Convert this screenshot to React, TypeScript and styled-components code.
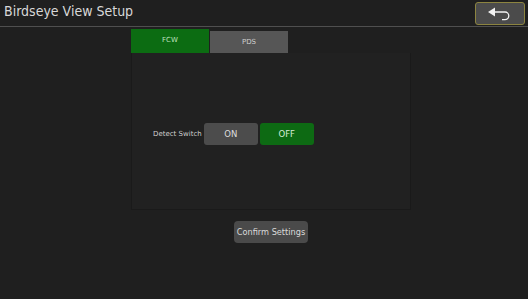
import React from "react";
import styled, { createGlobalStyle } from "styled-components";

const Global = createGlobalStyle`
  html, body { margin: 0; padding: 0; background: #1f1f1f; }
  body { font-family: "DejaVu Sans", "Liberation Sans", sans-serif; }
`;

const Screen = styled.div`
  width: 528px;
  height: 299px;
  background: #1f1f1f;
  display: flex;
  flex-direction: column;
  overflow: hidden;
`;

const Header = styled.div`
  height: 26px;
  display: flex;
  align-items: flex-start;
  justify-content: space-between;
  border-bottom: 1px solid #4f4f4f;
  padding: 0 3px 0 4px;
`;

const Title = styled.div`
  font-family: "DejaVu Sans Condensed", "DejaVu Sans", sans-serif;
  font-stretch: condensed;
  font-size: 14px;
  color: #d8d8d8;
  line-height: 18px;
  margin-top: 2px;
`;

const BackButton = styled.button`
  width: 50px;
  height: 23px;
  margin-top: 2px;
  background: #4b4b4b;
  border: 1px solid #8c8440;
  border-radius: 3px;
  display: flex;
  align-items: center;
  justify-content: center;
  padding: 0;
`;

const Body = styled.div`
  display: flex;
  flex-direction: column;
  align-items: center;
  padding-top: 1px;
  padding-left: 14px;
`;

const Card = styled.div`
  width: 280px;
  display: flex;
  flex-direction: column;
`;

const Tabs = styled.div`
  display: flex;
  align-items: flex-end;
  gap: 1px;
  height: 25px;
`;

const Tab = styled.div<{ $active?: boolean }>`
  width: 78px;
  height: ${(p) => (p.$active ? 24 : 22)}px;
  background: ${(p) => (p.$active ? "#0c6c12" : "#565656")};
  color: ${(p) => (p.$active ? "#bfe0bf" : "#cfcfcf")};
  font-size: 7px;
  display: flex;
  align-items: center;
  justify-content: center;
  padding-bottom: ${(p) => (p.$active ? 2 : 0)}px;
  box-sizing: border-box;
`;

const Panel = styled.div`
  height: 157px;
  background: #212121;
  border: 1px solid #1a1a1a;
  border-top: none;
  display: flex;
  align-items: center;
  padding-left: 21px;
  box-sizing: border-box;
`;

const Row = styled.div`
  display: flex;
  align-items: center;
  gap: 2px;
  margin-top: 6px;
`;

const Label = styled.div`
  font-size: 7px;
  color: #cfcfcf;
`;

const Toggle = styled.div<{ $on?: boolean }>`
  width: 54px;
  height: 22px;
  border-radius: 3px;
  background: ${(p) => (p.$on ? "#0d6a13" : "#4c4c4c")};
  color: ${(p) => (p.$on ? "#d6ecd6" : "#dcdcdc")};
  font-size: 8.5px;
  display: flex;
  align-items: center;
  justify-content: center;
`;

const Confirm = styled.div`
  margin-top: 11px;
  width: 74px;
  height: 22px;
  border-radius: 4px;
  background: #4a4a4a;
  color: #dadada;
  font-size: 8.2px;
  display: flex;
  align-items: center;
  justify-content: center;
`;

export default function App() {
  return (
    <Screen>
      <Global />
      <Header>
        <Title>Birdseye View Setup</Title>
        <BackButton>
          <svg width="30" height="16" viewBox="0 0 30 16">
            <path d="M3 6 L10 1.5 L10 10.5 Z" fill="#f2f2f2" />
            <path
              d="M9 6 H20 A3.8 3.8 0 0 1 20 13.6 H17"
              fill="none"
              stroke="#f2f2f2"
              strokeWidth="1.3"
            />
          </svg>
        </BackButton>
      </Header>
      <Body>
        <Card>
          <Tabs>
            <Tab $active>FCW</Tab>
            <Tab>PDS</Tab>
          </Tabs>
          <Panel>
            <Row>
              <Label>Detect Switch</Label>
              <Toggle>ON</Toggle>
              <Toggle $on>OFF</Toggle>
            </Row>
          </Panel>
        </Card>
        <Confirm>Confirm Settings</Confirm>
      </Body>
    </Screen>
  );
}
